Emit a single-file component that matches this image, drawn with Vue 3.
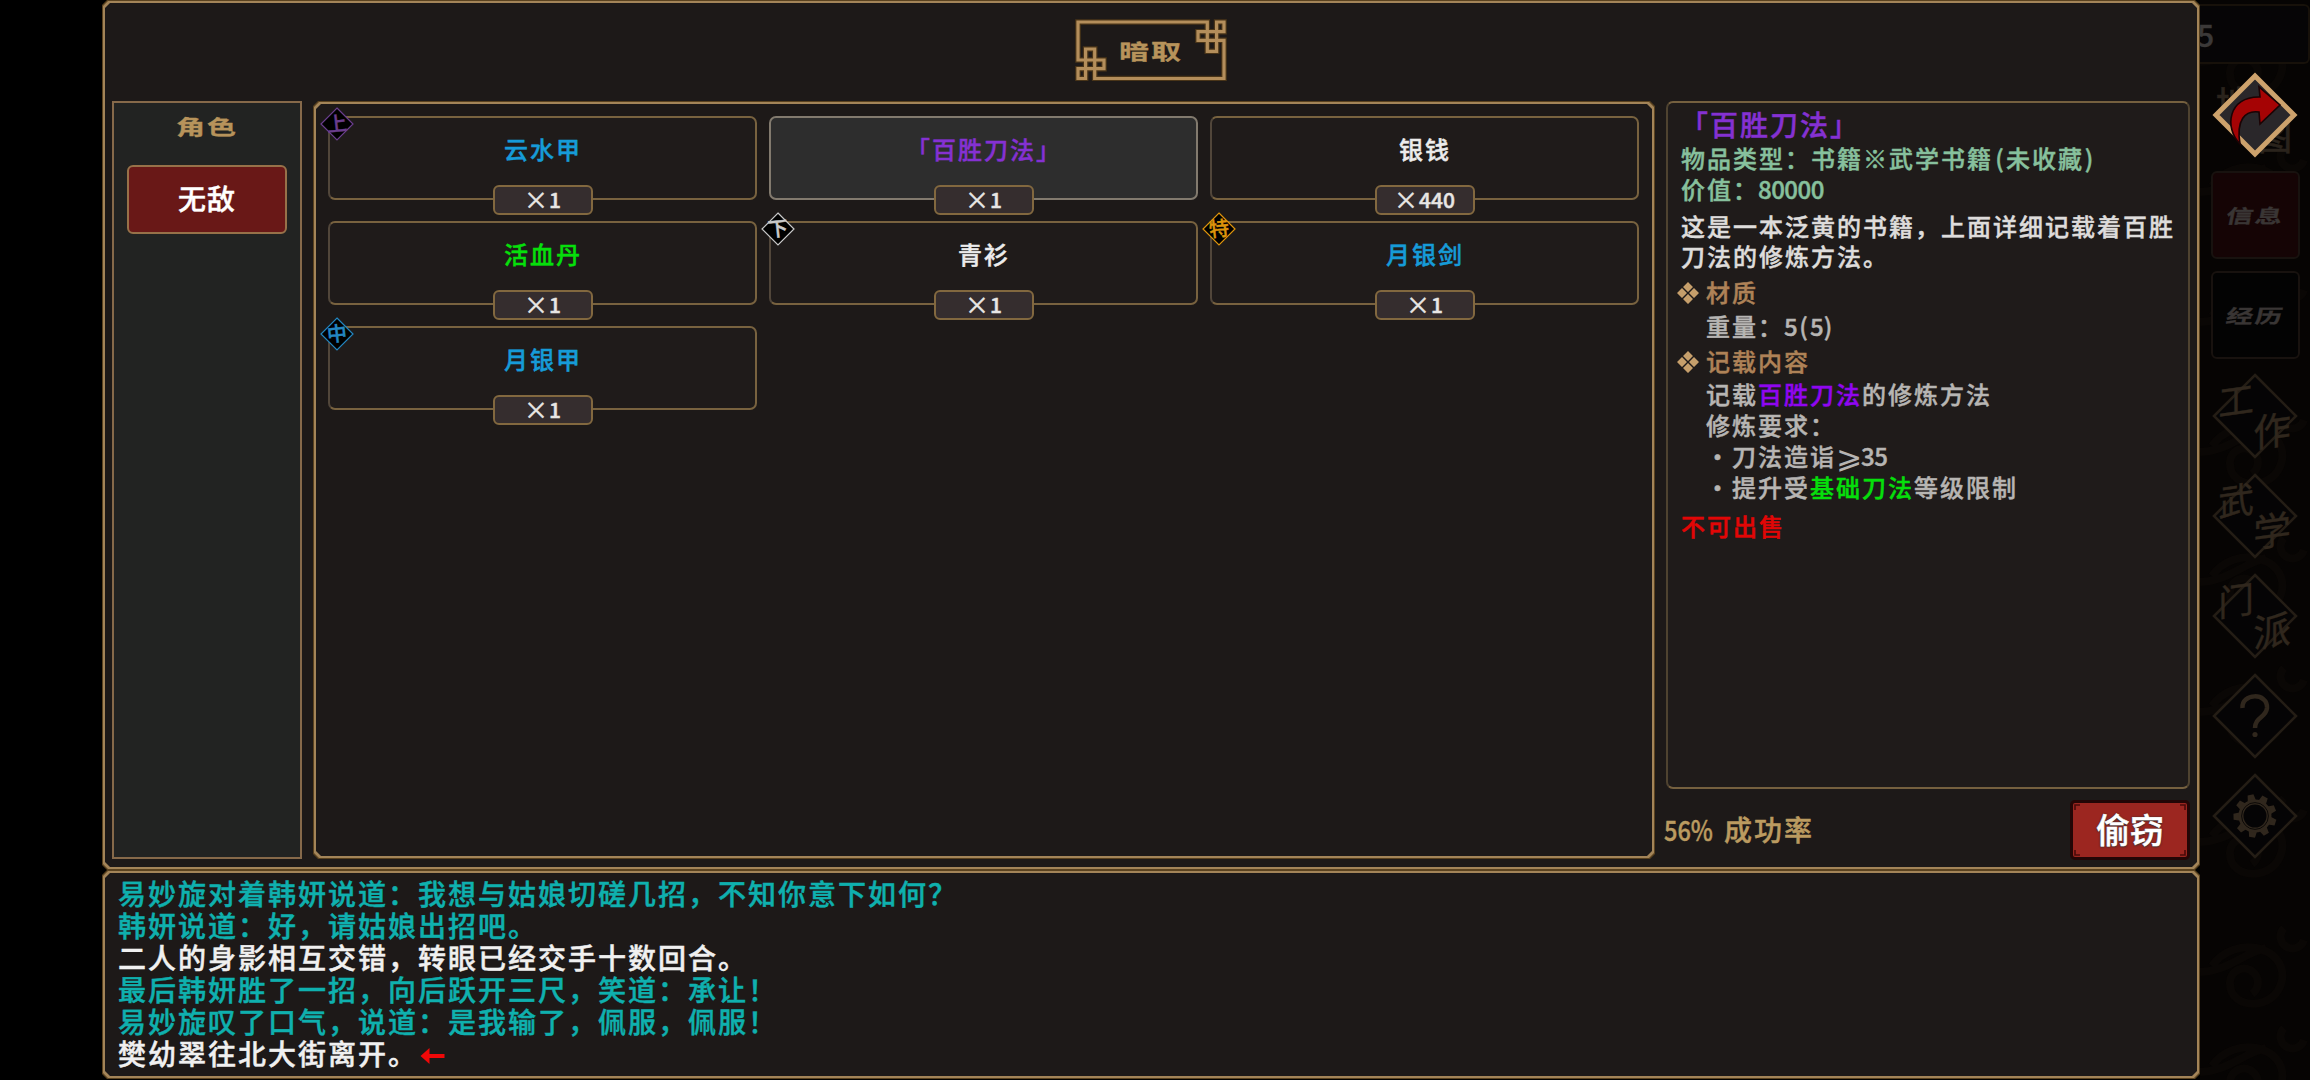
<template>
  <div class="page">
    <div class="main-col">
      <section class="frame dialog">
        <header class="dialog-head">
          <div class="title-box">
            <svg class="title-frame" viewBox="0 0 152 62" fill="none">
              <path :d="framePath" stroke="#4a3518" stroke-width="5.6" />
              <path :d="framePath" stroke="#b48e5b" stroke-width="3.2" />
            </svg>
            <span class="lishu title-text">暗取</span>
          </div>
        </header>

        <div class="dialog-body">
          <aside class="role-panel">
            <h3 class="lishu role-title">角色</h3>
            <button class="role-btn">无敌</button>
          </aside>

          <div class="frame bag">
            <div class="item-grid">
              <div
                v-for="item in items"
                :key="item.name"
                class="item"
                :class="{ active: item.name === selected }"
                @click="selected = item.name"
              >
                <span class="item-name" :class="item.color">{{ item.name }}</span>
                <span class="item-count"><i>×</i>{{ item.count }}</span>
                <span v-if="item.rank" class="rank" :class="item.rankClass">
                  <svg viewBox="0 0 34 34"><path d="M17 1L33 17L17 33L1 17Z" fill="#000" stroke="currentColor" stroke-width="1.2" /></svg>
                  <b>{{ item.rank }}</b>
                </span>
              </div>
            </div>
          </div>

          <div class="side">
            <div class="detail">
              <h2>「百胜刀法」</h2>
              <p class="type">物品类型：书籍※武学书籍<span class="half">(</span>未收藏<span class="half close">)</span></p>
              <p class="type">价值：<span class="num">80000</span></p>
              <p class="desc">这是一本泛黄的书籍，上面详细记载着百胜刀法的修炼方法。</p>
              <h4>
                <svg class="mark" viewBox="0 0 22 22"><path :d="markPath" /></svg>材质
              </h4>
              <p class="row weight">重量：<span class="half">5</span><span class="half">(</span><span class="half">5</span><span class="half close">)</span></p>
              <h4 class="second">
                <svg class="mark" viewBox="0 0 22 22"><path :d="markPath" /></svg>记载内容
              </h4>
              <p class="row first">记载<em class="violet">百胜刀法</em>的修炼方法</p>
              <p class="row">修炼要求：</p>
              <p class="row dot"><span class="bullet">·</span>刀法造诣<span class="gte">⩾</span><span class="num">35</span></p>
              <p class="row dot"><span class="bullet">·</span>提升受<em class="green">基础刀法</em>等级限制</p>
              <p class="no-sell">不可出售</p>
            </div>
            <div class="action">
              <span class="rate"><span class="rate-num">56%</span><span class="rate-label">成功率</span></span>
              <button class="steal-btn">
                <svg class="corners" viewBox="0 0 120 60" fill="none" stroke="#4a0b0a" stroke-width="1.6">
                  <path d="M5 10V5H10M110 5H115V10M115 50V55H110M10 55H5V50" />
                </svg>
                偷窃
              </button>
            </div>
          </div>
        </div>
      </section>

      <section class="frame log">
        <p v-for="(line, i) in logs" :key="i" :class="line.type">
          {{ line.text }}<svg v-if="line.arrow" class="log-arrow" viewBox="0 0 24 16"><path d="M0 8L9 0V6H24V10H9V16Z" /></svg>
        </p>
      </section>
    </div>

    <nav class="sidebar">
      <svg class="cloud" viewBox="0 0 110 1080" fill="none" stroke="#0a0705" stroke-width="8">
        <path v-for="y in cloudRows" :key="y" :transform="`translate(0 ${y})`" d="M0 62C30 60 40 45 66 38M52 84a14 14 0 1 0 -22 -10c0 26 46 28 52 -4c5 -34 -48 -46 -70 -14M104 30a12 12 0 1 1 -20 -12" />
      </svg>
      <div class="counter">5</div>
      <div class="back">
        <i class="under left">地</i><i class="under right">图</i>
        <svg viewBox="0 0 90 90">
          <path d="M45 6L84 45L45 84L6 45Z" fill="#2a272a" stroke="#cda26c" stroke-width="5" />
          <path d="M30 74C14 58 18 26 50 27L49 17L70 35L50 54L49 42C35 40 26 50 30 74Z" fill="#a50304" stroke="#1b0304" stroke-width="1.6" />
        </svg>
      </div>
      <div class="tab red"><span>信息</span></div>
      <div class="tab"><span>经历</span></div>
      <div v-for="menu in menus" :key="menu.key" class="menu">
        <svg viewBox="0 0 90 90">
          <path d="M45 4L86 45L45 86L4 45Z" fill="#050405" stroke="#241d15" stroke-width="2.6" />
          <g v-if="menu.key === 'set'">
            <path v-for="n in 9" :key="n" d="M40.500 32L42 23.500H48L49.500 32Z" fill="#30271d" :transform="`rotate(${n * 40 - 12} 45 45)`" />
            <circle cx="45" cy="45" r="14" fill="#050405" stroke="#30271d" stroke-width="5" />
            <circle cx="45" cy="45" r="13.4" fill="none" stroke="#0c0907" stroke-width="1" />
          </g>
          <g v-if="menu.key === 'help'">
            <path d="M32.500 37C31 22 58 21 57 37C56 47 45 46 45 57" fill="none" stroke="#30271d" stroke-width="4.500" />
            <circle cx="45" cy="63.500" r="2.600" fill="#30271d" />
          </g>
        </svg>
        <b v-if="menu.a" class="a">{{ menu.a }}</b>
        <b v-if="menu.b" class="b">{{ menu.b }}</b>
      </div>
    </nav>
  </div>
</template>

<script setup>
import { ref } from 'vue'

const selected = ref('「百胜刀法」')

const items = [
  { name: '云水甲', count: 1, color: 'blue', rank: '上', rankClass: 'r-up' },
  { name: '「百胜刀法」', count: 1, color: 'purple' },
  { name: '银钱', count: 440, color: 'white' },
  { name: '活血丹', count: 1, color: 'green' },
  { name: '青衫', count: 1, color: 'white', rank: '下', rankClass: 'r-down' },
  { name: '月银剑', count: 1, color: 'blue', rank: '特', rankClass: 'r-special' },
  { name: '月银甲', count: 1, color: 'blue', rank: '中', rankClass: 'r-mid' }
]

const logs = [
  { type: 'say', text: '易妙旋对着韩妍说道：我想与姑娘切磋几招，不知你意下如何？' },
  { type: 'say', text: '韩妍说道：好，请姑娘出招吧。' },
  { type: 'plain', text: '二人的身影相互交错，转眼已经交手十数回合。' },
  { type: 'say', text: '最后韩妍胜了一招，向后跃开三尺，笑道：承让！' },
  { type: 'say', text: '易妙旋叹了口气，说道：是我输了，佩服，佩服！' },
  { type: 'plain', text: '樊幼翠往北大街离开。', arrow: true }
]

const menus = [
  { key: 'work', a: '工', b: '作' },
  { key: 'skill', a: '武', b: '学' },
  { key: 'sect', a: '门', b: '派' },
  { key: 'help' },
  { key: 'set' }
]

const cloudRows = [0, 130, 260, 390, 520, 650, 780, 910, 1010]

// 标题回纹边框，右上和左下各一个绳结
const framePath = 'M3 3H132.300V32.300H141.600V3H149V12.700H123V21.300H149V59.500H19.700V30H10.600V59.500H3V49.700H29V41H3Z'

const markPath = 'M11 0L16 5L11 10L6 5ZM5 6L10 11L5 16L0 11ZM17 6L22 11L17 16L12 11ZM11 12L16 17L11 22L6 17Z'
</script>

<style>
html,
body {
  margin: 0;
  background: #000;
}
</style>

<style scoped>
.page {
  display: flex;
  box-sizing: border-box;
  width: 2310px;
  height: 1080px;
  padding-left: 102px;
  overflow: hidden;
  background: #000;
  font-family: "Noto Sans CJK SC", sans-serif;
  font-weight: 500;
  -webkit-text-stroke: 0.45px currentColor;
}

h2, h3, h4, p {
  margin: 0;
  font-weight: 500;
}

em, i {
  font-style: normal;
}

button {
  font-family: inherit;
  cursor: pointer;
}

.main-col {
  width: 2098px;
  display: flex;
  flex-direction: column;
}

/* 切角双线边框 */
.frame {
  --cut: 5px;
  position: relative;
  z-index: 0;
  box-sizing: border-box;
  background: #5a421f;
  clip-path: polygon(var(--cut) 0, calc(100% - var(--cut)) 0, 100% var(--cut), 100% calc(100% - var(--cut)), calc(100% - var(--cut)) 100%, var(--cut) 100%, 0 calc(100% - var(--cut)), 0 var(--cut));
}

.frame::before,
.frame::after {
  content: "";
  position: absolute;
  z-index: -1;
  inset: 1px;
  background: #a38458;
  clip-path: polygon(var(--cut) 0, calc(100% - var(--cut)) 0, 100% var(--cut), 100% calc(100% - var(--cut)), calc(100% - var(--cut)) 100%, var(--cut) 100%, 0 calc(100% - var(--cut)), 0 var(--cut));
}

.frame::after {
  inset: 3px;
  background: #1d1918;
}

.dialog {
  height: 870px;
}

.dialog-head {
  height: 101px;
  display: flex;
  justify-content: center;
  padding-top: 19px;
  box-sizing: border-box;
}

.title-box {
  position: relative;
  width: 152px;
  height: 62px;
  display: flex;
  align-items: center;
  justify-content: center;
}

.title-frame {
  position: absolute;
  inset: 0;
}

.lishu {
  display: inline-block;
  color: #b7935b;
  font-size: 29px;
  font-weight: 700;
  line-height: 30px;
  letter-spacing: 2px;
  transform: scaleY(0.7);
}

.title-text {
  font-size: 30px;
}

.dialog-body {
  display: flex;
  gap: 11px;
  height: 758px;
  padding-left: 10px;
}

.role-panel {
  width: 190px;
  box-sizing: border-box;
  border: 2px solid #86694a;
  background: #222322;
  display: flex;
  flex-direction: column;
  align-items: center;
}

.role-title {
  margin-top: 8px;
}

.role-btn {
  width: 160px;
  height: 69px;
  margin-top: 24px;
  padding: 0 0 3px;
  border: 2px solid #977149;
  border-radius: 6px;
  background: #691817;
  color: #fff;
  font-size: 28px;
  font-weight: 500;
  letter-spacing: 1px;
}

.bag {
  width: 1342px;
  padding: 15px;
}

.item-grid {
  display: grid;
  grid-template-columns: repeat(3, 429px);
  grid-auto-rows: 84px;
  gap: 21px 12px;
}

.item {
  position: relative;
  box-sizing: border-box;
  border: 2px solid #78623f;
  border-left-color: #51463a;
  border-radius: 7px;
  background: #1f1b1a;
  display: flex;
  justify-content: center;
}

.item.active {
  border-color: #827a6e;
  background: #2d2d2d;
}

.item-name {
  font-size: 24px;
  line-height: 62px;
  letter-spacing: 2px;
  margin-left: 1px;
}

.blue { color: #169bd8; }
.purple { color: #8531d2; }
.white { color: #ececec; }
.green { color: #06df0b; }
.violet { color: #9006f0; }

.item-count {
  position: absolute;
  left: 50%;
  bottom: -17px;
  width: 100px;
  height: 30px;
  margin-left: -50px;
  box-sizing: border-box;
  border: 2px solid #82683f;
  border-radius: 6px;
  background: #352d2e;
  color: #e8e6e4;
  font-size: 21px;
  line-height: 25px;
  text-align: center;
}

.item-count i {
  display: inline-block;
  margin-right: 1px;
  font-size: 24px;
  line-height: 20px;
  vertical-align: -1px;
  font-weight: 400;
}

.rank {
  position: absolute;
  left: -10px;
  top: -11px;
  width: 34px;
  height: 34px;
}

.rank svg {
  display: block;
  width: 34px;
  height: 34px;
}

.rank b {
  position: absolute;
  inset: 0;
  font-size: 20px;
  line-height: 31px;
  text-align: center;
  font-weight: 500;
  transform: rotate(-6deg);
}

.r-up { color: #6a3d8d; }
.r-down { color: #c9c9c9; }
.r-special { color: #dc930b; }
.r-mid { color: #2386c0; }

.side {
  width: 524px;
  display: flex;
  flex-direction: column;
}

.detail {
  box-sizing: border-box;
  height: 688px;
  padding: 3px 10px 0 13px;
  border: 2px solid #75603f;
  border-left-color: #4f4330;
  border-right-color: #4f4330;
  border-radius: 7px;
  background: #1f1b1a;
  font-size: 24px;
  line-height: 31px;
  letter-spacing: 2px;
  color: #b7b5b3;
}

.detail h2 {
  font-size: 28px;
  line-height: 36px;
  margin-left: -1px;
  color: #8531d2;
}

.type { color: #87c09d; }

.half {
  display: inline-block;
  width: 13px;
  letter-spacing: 0;
  text-align: center;
}

.half.close {
  text-indent: -3px;
}

.num {
  margin-left: -1px;
  letter-spacing: -0.5px;
}

.desc {
  margin-top: 7px;
  line-height: 30px;
  color: #dedcdb;
}

.detail h4 {
  display: flex;
  align-items: center;
  margin: 5px 0 0 -4px;
  color: #ae8257;
}

.detail h4.second {
  margin-top: 4px;
}

.mark {
  width: 22px;
  height: 22px;
  margin: 2px 7px 0 0;
  fill: #c69f6b;
}

.row {
  padding-left: 25px;
}

.weight { margin-top: 3px; }
.row.first { margin-top: 2px; }

.bullet,
.gte {
  display: inline-block;
  width: 26px;
  letter-spacing: 0;
  text-align: center;
}

.bullet {
  text-indent: -3px;
}

.gte {
  font-family: "DejaVu Sans", sans-serif;
  font-weight: 400;
  line-height: 20px;
  -webkit-text-stroke: 0;
  transform: scale(1.3);
}

.no-sell {
  margin-top: 8px;
  color: #e20606;
}

.action {
  flex: 1;
  display: flex;
  align-items: flex-end;
  justify-content: space-between;
}

.rate {
  display: flex;
  height: 60px;
  line-height: 60px;
  font-size: 28px;
  color: #bb9b60;
}

.rate-num {
  width: 60px;
  transform: scaleX(0.84);
  transform-origin: left;
  margin-left: -2px;
}

.rate-label {
  letter-spacing: 2px;
}

.steal-btn {
  position: relative;
  width: 120px;
  height: 60px;
  margin-bottom: -1px;
  padding: 0 0 2px;
  border: 3px solid #240606;
  border-radius: 5px;
  background: #9c2620;
  color: #fff;
  font-size: 34px;
  font-weight: 500;
  line-height: 50px;
  text-shadow: 0 0 2px #333, 0 1px 2px #333;
}

.corners {
  position: absolute;
  inset: -3px;
}

.log {
  height: 209px;
  padding: 7px 16px;
}

.log p {
  font-size: 28px;
  line-height: 32px;
  letter-spacing: 2px;
  white-space: nowrap;
}

.say { color: #0fb0ae; }
.plain { color: #f0f0f0; }

.log-arrow {
  width: 25px;
  height: 16px;
  margin-left: 2px;
  vertical-align: 1px;
  fill: #f00808;
}

/* 右侧被遮罩压暗的菜单 */
.sidebar {
  position: relative;
  flex: 1;
  display: flex;
  flex-direction: column;
  align-items: center;
  background: #060403;
  overflow: hidden;
}

.cloud {
  position: absolute;
  inset: 0;
}

.counter {
  position: relative;
  box-sizing: border-box;
  width: 110px;
  height: 60px;
  margin-top: 4px;
  border: 2px solid #17110a;
  border-left: 0;
  border-radius: 0 6px 6px 0;
  background: #060506;
  color: #3b3938;
  font-size: 30px;
  line-height: 56px;
  text-indent: -3px;
}

.back {
  position: relative;
  width: 90px;
  height: 90px;
  margin-top: 6px;
}

.back svg {
  position: relative;
  display: block;
}

.under {
  position: absolute;
  color: #2a231c;
  font-size: 34px;
  line-height: 36px;
}

.under.left { left: 6px; top: 14px; }
.under.right { right: 8px; bottom: 6px; }

.tab {
  position: relative;
  box-sizing: border-box;
  width: 89px;
  height: 88px;
  margin-top: 11px;
  border: 2px solid #18120f;
  border-radius: 6px;
  background: #030303;
  color: #393534;
  text-align: center;
}

.tab.red {
  background: #150405;
}

.tab + .tab {
  margin-top: 12px;
}

.tab span {
  display: block;
  font-size: 27px;
  font-weight: 700;
  line-height: 84px;
  letter-spacing: 2px;
  transform: scaleY(0.7) skewX(-8deg);
}

.menu {
  position: relative;
  width: 90px;
  height: 90px;
  margin-top: 10px;
}

.menu svg {
  display: block;
}

.tab + .menu {
  margin-top: 12px;
}

.menu b {
  position: absolute;
  color: #30271d;
  font-size: 36px;
  line-height: 40px;
  font-weight: 400;
  transform: rotate(-8deg) skewX(-8deg);
}

.menu .a { left: 8px; top: 7px; }
.menu .b { right: 9px; top: 38px; font-size: 38px; }
</style>
